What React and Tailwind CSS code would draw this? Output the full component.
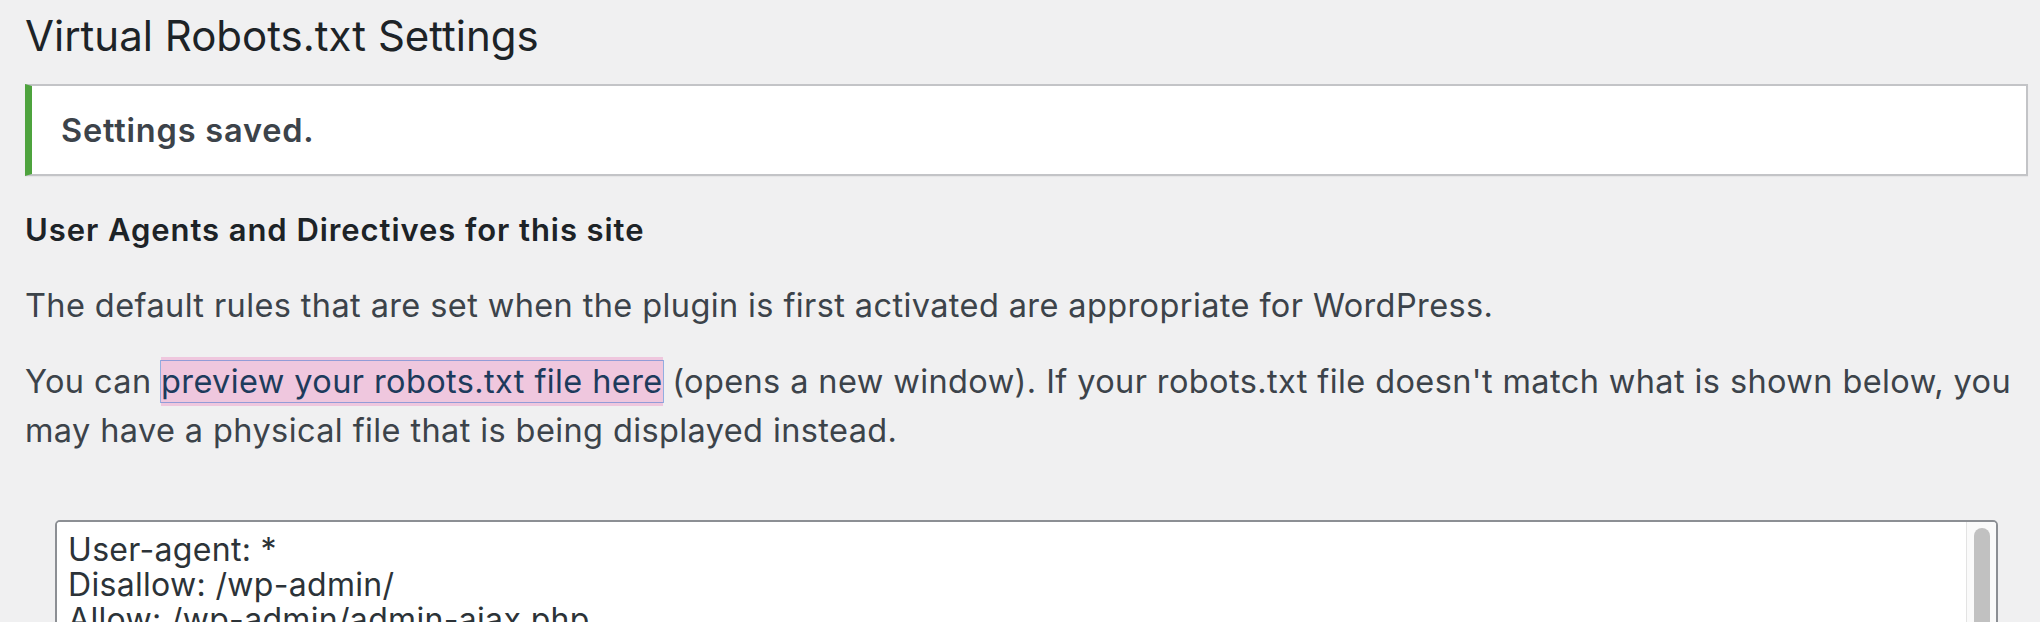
const robotsRules = `User-agent: *
Disallow: /wp-admin/
Allow: /wp-admin/admin-ajax.php

Sitemap: https://example.com/wp-sitemap.xml`;

const App = () => {
  return (
    <div
      className="min-h-screen bg-[#f0f0f1] pl-[25px] pr-[12px] pt-[7px] text-[#3c434a]"
      style={{ fontFamily: "Inter, 'Noto Sans', sans-serif" }}
    >
      <h1 className="text-[42px] leading-[57px] font-normal text-[#1d2327]">
        Virtual Robots.txt Settings
      </h1>

      <div className="mt-[20px] bg-white border-2 border-[#c3c4c7] border-l-[7px] border-l-[#4ea33e] shadow-[0_1px_1px_rgba(0,0,0,0.04)] pl-[29px] pr-[24px] pt-[20.5px] pb-[19px]">
        <p className="text-[32.5px] leading-[48.75px] font-semibold tracking-[0.025em] text-[#3c434a]">
          Settings saved.
        </p>
      </div>

      <h2 className="mt-[34px] text-[31px] leading-[40px] font-semibold tracking-[0.03em] text-[#1d2327]">
        User Agents and Directives for this site
      </h2>

      <p className="mt-[31.7px] text-[32.5px] leading-[48.75px] tracking-[0.012em]">
        The default rules that are set when the plugin is first activated are
        appropriate for WordPress.
      </p>

      <p className="mt-[27.3px] text-[32.5px] leading-[48.75px] tracking-[0.012em]">
        You can{" "}
        <a href="#" className="bg-[#efc7de] py-[5px] text-[#1d3b5c] no-underline">
          <span className="py-[1px] shadow-[0_0_0_1px_rgba(70,120,210,0.55)]">
            preview your robots.txt file here
          </span>
        </a>{" "}
        (opens a new window). If your robots.txt file doesn't match what is
        shown below, you may have a physical file that is being displayed
        instead.
      </p>

      <div className="mt-[65px] ml-[30px] mr-[30px] flex h-[400px] rounded-[5px] border-2 border-[#8c8f94] bg-white overflow-hidden">
        <textarea
          readOnly
          value={robotsRules}
          className="flex-1 resize-none overflow-hidden bg-white pl-[11px] pt-[10px] text-[32px] leading-[35px] tracking-[0.01em] text-[#2c3338] outline-none"
          style={{ fontFamily: "Inter, 'Noto Sans', sans-serif" }}
        />
        <div className="w-[30px] border-l border-[#e3e3e3] bg-[#fafafa] pt-[6px] flex justify-center">
          <div className="h-[300px] w-[16px] rounded-full bg-[#c1c1c1]" />
        </div>
      </div>
    </div>
  );
};

export default App;
